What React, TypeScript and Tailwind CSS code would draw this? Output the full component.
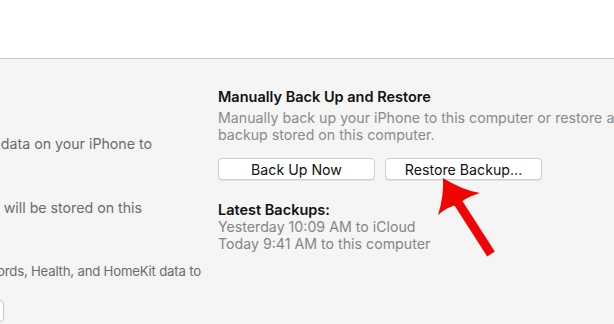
export default function App() {
  return (
    <div className="flex h-[324px] w-[614px] flex-col overflow-hidden bg-white font-['Inter',sans-serif]">
      <div className="h-[59px] shrink-0 border-b border-[#c6c6c6] bg-white" />
      <div className="flex flex-1 bg-[#f5f5f5]">
        {/* left column, clipped at the window edge */}
        <div className="relative w-[218px] shrink-0 overflow-hidden text-[14.2px] text-[#6b6b6b]">
          <div className="absolute right-[66px] top-[74px] whitespace-nowrap text-right">data on your iPhone to</div>
          <div className="absolute right-[76px] top-[138px] whitespace-nowrap text-right">will be stored on this</div>
          <div className="absolute left-[-3px] top-[203px] whitespace-nowrap text-[13.2px] tracking-[-0.2px]">ords, Health, and HomeKit data to</div>
          <div className="absolute left-[-20px] top-[241px] h-[22px] w-[24px] rounded-[4px] border border-[#c4c4c4] bg-white" />
        </div>

        <div className="flex flex-col pt-[29px] text-[14.2px] leading-[17px]">
          <div className="text-[14.5px] font-semibold text-[#111]">Manually Back Up and Restore</div>
          <div className="mt-[4px] whitespace-nowrap text-[#8a8a8a]">
            Manually back up your iPhone to this computer or restore a
            <br />
            backup stored on this computer.
          </div>
          <div className="mt-[15px] flex gap-[10px]">
            <button className="h-[22px] w-[157px] rounded-[4px] border border-[#cfcfcf] bg-white text-[14.2px] text-[#111] shadow-[0_1px_0_rgba(0,0,0,0.08)]">
              Back Up Now
            </button>
            <button className="h-[22px] w-[157px] rounded-[4px] border border-[#cfcfcf] bg-white text-[14.2px] text-[#111] shadow-[0_1px_0_rgba(0,0,0,0.08)]">
              Restore Backup...
            </button>
          </div>
          <div className="mt-[21px] text-[14.5px] font-semibold text-[#111]">Latest Backups:</div>
          <div className="text-[#858585]">Yesterday 10:09 AM to iCloud</div>
          <div className="text-[#858585]">Today 9:41 AM to this computer</div>
        </div>
      </div>

      {/* red annotation arrow */}
      <svg className="pointer-events-none absolute left-0 top-0" width="614" height="324" viewBox="0 0 614 324">
        <line x1="457" y1="201" x2="491" y2="254" stroke="#f00404" strokeWidth="9" />
        <path d="M443 178 Q462 190 480 193 Q464 198 458 205 Q448 206 438 215 Q444 196 443 178 Z" fill="#f00404" />
      </svg>
    </div>
  );
}
